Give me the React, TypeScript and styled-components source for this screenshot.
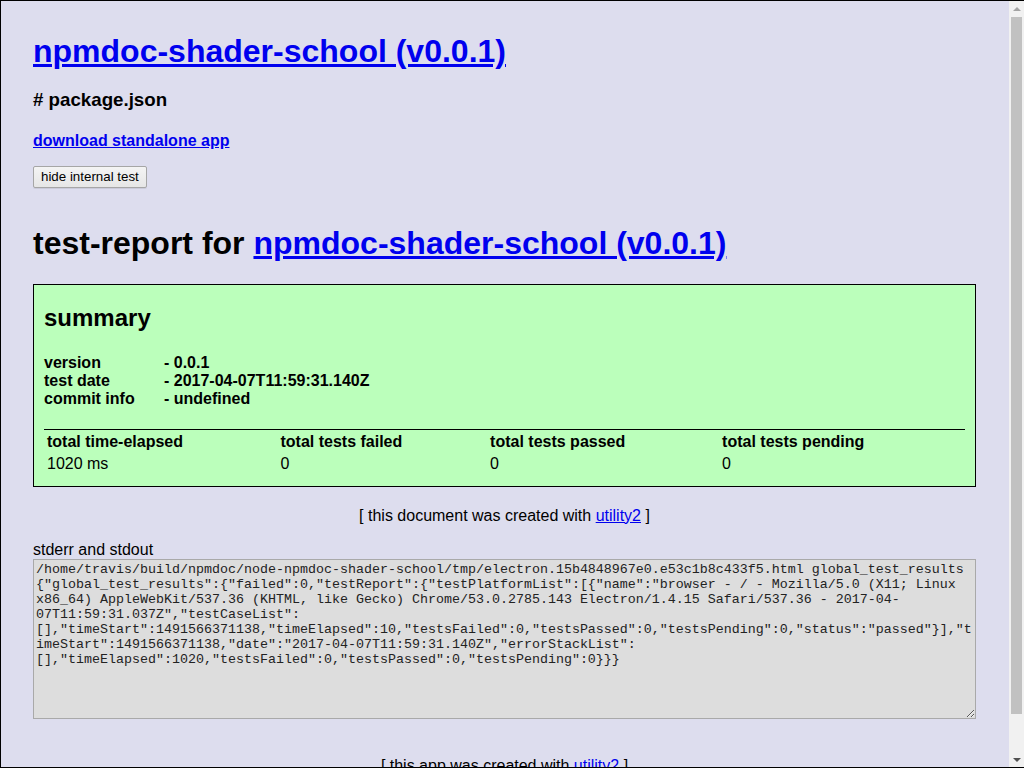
import styled, { createGlobalStyle } from "styled-components";

const GlobalStyle = createGlobalStyle`
    html, body {
        margin: 0;
        padding: 0;
        height: 100%;
        overflow: hidden;
    }
    body {
        background: #dde;
        font-family: "Liberation Sans", Arial, Helvetica, sans-serif;
        color: #000;
    }
    a {
        color: #00e;
    }
`;

// the whole window sits inside a thin black frame, scrollbar included
const Frame = styled.div`
    box-sizing: border-box;
    height: 100vh;
    display: flex;
    border-top: 1px solid #000;
    border-left: 1px solid #000;
    border-bottom: 1px solid #000;
    overflow: hidden;
`;
const Page = styled.div`
    flex: 1;
    min-width: 0;
    padding: 32px 33px 32px 32px;
`;
const ScrollBar = styled.div`
    width: 15px;
    flex: none;
    background: #f1f1f1;
    display: flex;
    flex-direction: column;
    align-items: center;
`;
const Arrow = styled.div<{ $down?: boolean }>`
    height: 15px;
    width: 15px;
    display: flex;
    align-items: center;
    justify-content: center;
    &::after {
        content: "";
        border-left: 4px solid transparent;
        border-right: 4px solid transparent;
        ${(props) =>
            props.$down
                ? "border-top: 4px solid #505050;"
                : "border-bottom: 4px solid #a3a3a3;"}
    }
`;
const Track = styled.div`
    flex: 1;
    width: 100%;
    padding: 1px 2px 0 2px;
    box-sizing: border-box;
`;
const Thumb = styled.div`
    height: 697px;
    background: #c1c1c1;
`;
const Title = styled.h1`
    font-size: 32px;
    font-weight: bold;
    margin: 0 0 16px 0;
`;
const SubHeading = styled.h3`
    font-size: 18.72px;
    margin: 18.72px 0 16px 0;
`;
const DownloadHeading = styled.h4`
    font-size: 16px;
    margin: 21.28px 0 16px 0;
`;
const ButtonBar = styled.div`
    display: flex;
    margin-bottom: 16px;
`;
const Button = styled.button`
    font-family: "Liberation Sans", Arial, sans-serif;
    font-size: 13.33px;
    color: #000;
    background: linear-gradient(#f4f4f4, #e6e6e6);
    border: 1px solid #a6a6a6;
    border-radius: 2px;
    box-shadow: 0 1px 0 rgba(0, 0, 0, 0.08);
    padding: 2px 7px 3px 7px;
`;
const ReportDiv = styled.div`
    display: flow-root;
    padding-bottom: 18px;
`;
const ReportTitle = styled.h1`
    font-size: 32px;
    margin: 21.44px 0;
`;
const SummaryBox = styled.div`
    background: #bfb;
    border: 1px solid #000;
    padding: 0 10px 10px 10px;
`;
const SummaryTitle = styled.h2`
    font-size: 24px;
    margin: 19px 0 22px 0;
`;
const InfoTable = styled.table`
    border-spacing: 0;
    font-weight: bold;
    font-size: 16px;
    td {
        padding: 0;
        line-height: 18px;
    }
    td:first-child {
        width: 120px;
    }
`;
const TotalsTable = styled.table`
    width: 100%;
    margin-top: 21px;
    border-top: 1px solid #000;
    border-spacing: 2px;
    text-align: left;
    font-size: 16px;
    th, td {
        padding: 1px;
    }
`;
const Footer = styled.div<{ $gap: number }>`
    margin-top: ${(props) => props.$gap}px;
    text-align: center;
    font-size: 16px;
`;
const OutputLabel = styled.label`
    display: block;
    margin-top: 16px;
    font-size: 16px;
`;
const OutputArea = styled.textarea`
    display: block;
    box-sizing: border-box;
    width: 100%;
    height: 160px;
    margin: 0;
    padding: 2px;
    background: #ddd;
    border: 1px solid #a9a9a9;
    color: #222;
    font-family: "Liberation Mono", monospace;
    font-size: 13.33px;
    line-height: 15px;
`;

const pkgName = "npmdoc-shader-school (v0.0.1)";

const output =
    "/home/travis/build/npmdoc/node-npmdoc-shader-school/tmp/electron.15b4848967e0.e53c1b8c433f5.html global_test_results " +
    '{"global_test_results":{"failed":0,"testReport":{"testPlatformList":[{"name":"browser - / - Mozilla/5.0 (X11; Linux x86_64) AppleWebKit/537.36 (KHTML, like Gecko) Chrome/53.0.2785.143 Electron/1.4.15 Safari/537.36 - 2017-04-07T11:59:31.037Z","testCaseList":' +
    '[],"timeStart":1491566371138,"timeElapsed":10,"testsFailed":0,"testsPassed":0,"testsPending":0,"status":"passed"}],"timeStart":1491566371138,"date":"2017-04-07T11:59:31.140Z","errorStackList":' +
    '[],"timeElapsed":1020,"testsFailed":0,"testsPassed":0,"testsPending":0}}}';

const info = [
    ["version", "- 0.0.1"],
    ["test date", "- 2017-04-07T11:59:31.140Z"],
    ["commit info", "- undefined"],
];

const totals = [
    ["total time-elapsed", "1020 ms"],
    ["total tests failed", "0"],
    ["total tests passed", "0"],
    ["total tests pending", "0"],
];

function App() {
    return (
        <>
            <GlobalStyle />
            <Frame>
                <Page>
                    <Title>
                        <a href="#">{pkgName}</a>
                    </Title>
                    <SubHeading># package.json</SubHeading>
                    <DownloadHeading>
                        <a href="#">download standalone app</a>
                    </DownloadHeading>
                    <ButtonBar>
                        <Button>hide internal test</Button>
                    </ButtonBar>
                    <ReportDiv>
                        <ReportTitle>
                            test-report for <a href="#">{pkgName}</a>
                        </ReportTitle>
                        <SummaryBox>
                            <SummaryTitle>summary</SummaryTitle>
                            <InfoTable>
                                <tbody>
                                    {info.map(([k, v]) => (
                                        <tr key={k}>
                                            <td>{k}</td>
                                            <td>{v}</td>
                                        </tr>
                                    ))}
                                </tbody>
                            </InfoTable>
                            <TotalsTable>
                                <thead>
                                    <tr>
                                        {totals.map(([k]) => (
                                            <th key={k}>{k}</th>
                                        ))}
                                    </tr>
                                </thead>
                                <tbody>
                                    <tr>
                                        {totals.map(([k, v]) => (
                                            <td key={k}>{v}</td>
                                        ))}
                                    </tr>
                                </tbody>
                            </TotalsTable>
                        </SummaryBox>
                        <Footer $gap={20}>
                            [ this document was created with <a href="#">utility2</a> ]
                        </Footer>
                        <OutputLabel>stderr and stdout</OutputLabel>
                        <OutputArea readOnly defaultValue={output} />
                    </ReportDiv>
                    <Footer $gap={20}>
                        [ this app was created with <a href="#">utility2</a> ]
                    </Footer>
                </Page>
                <ScrollBar>
                    <Arrow />
                    <Track>
                        <Thumb />
                    </Track>
                    <Arrow $down />
                </ScrollBar>
            </Frame>
        </>
    );
}

export default App;
